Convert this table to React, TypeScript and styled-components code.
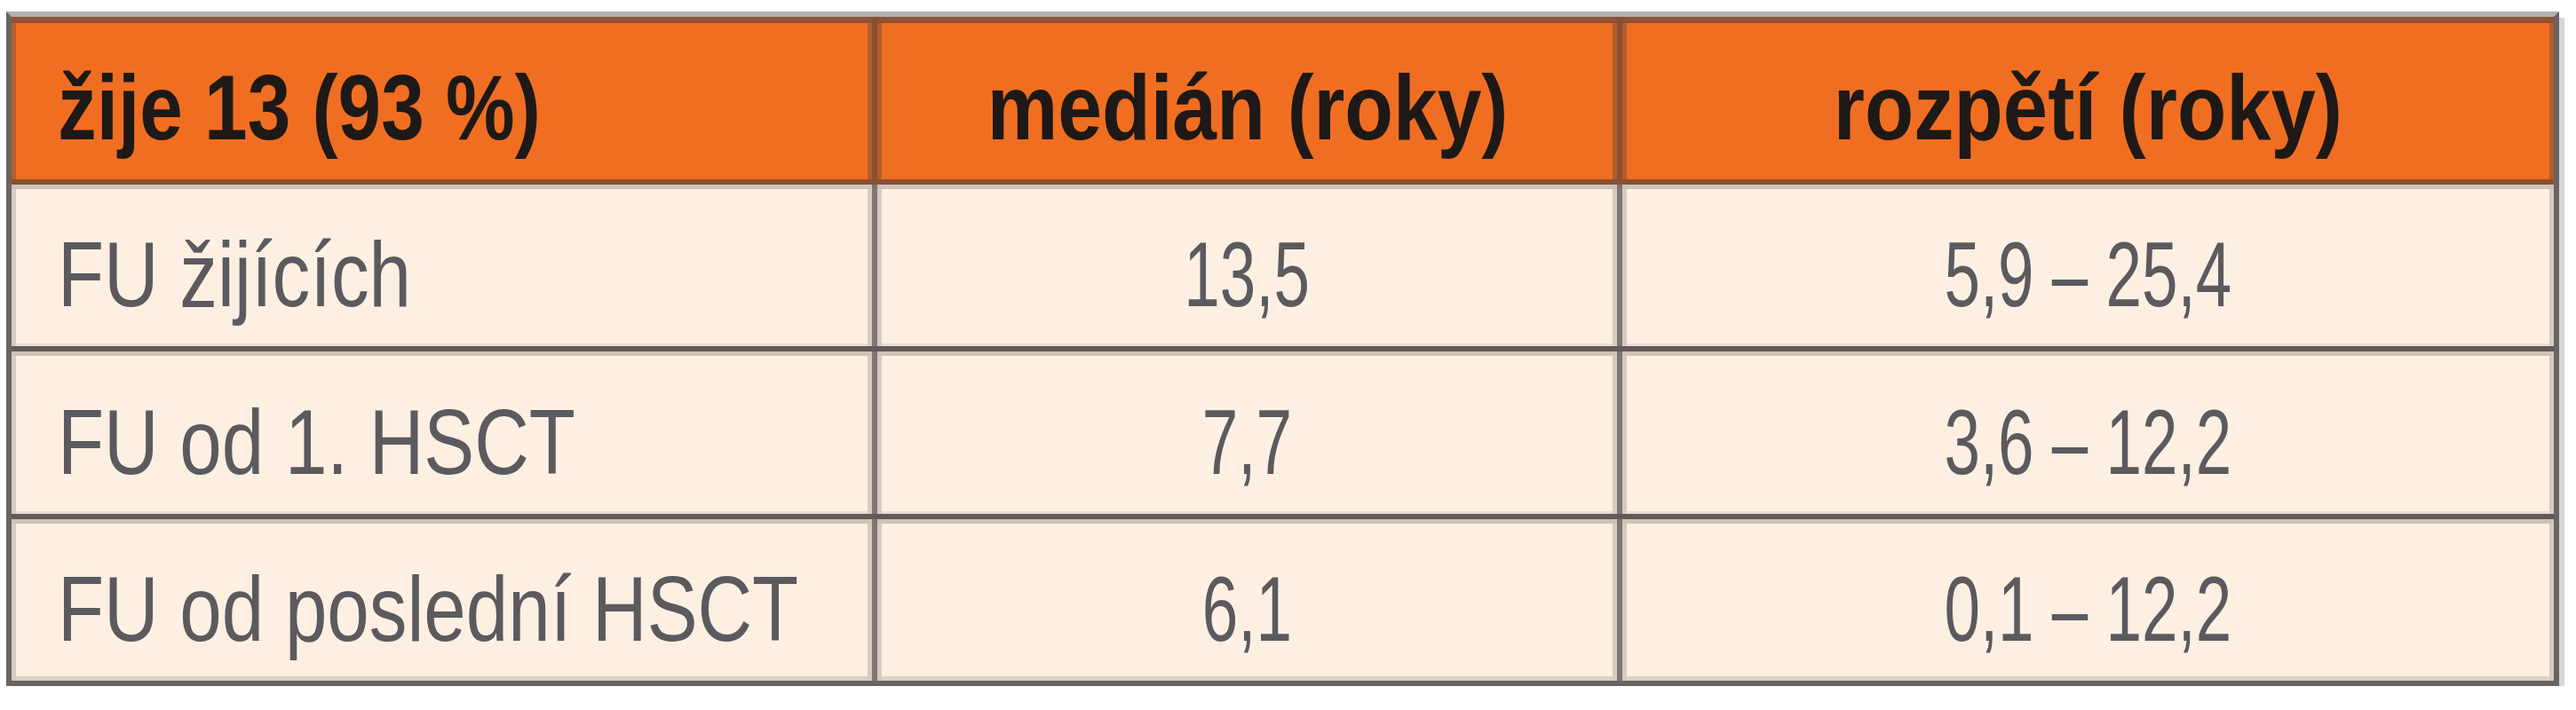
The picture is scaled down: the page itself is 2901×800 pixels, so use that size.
import React from "react";
import styled, { createGlobalStyle } from "styled-components";

const GlobalStyle = createGlobalStyle`
  html, body {
    margin: 0;
    padding: 0;
    background: #ffffff;
  }
  body {
    font-family: "Liberation Sans", Arial, sans-serif;
  }
`;

const Page = styled.div`
  padding: 13px 0 0 7px;
`;

const Table = styled.div`
  width: 2875px;
  box-sizing: border-box;
  display: flex;
  flex-direction: column;
  border: 6px solid #6a6361;
  border-top-color: #b3b0ae;
  background: #6a6361;
  box-shadow: 6px 7px 0 #d8d6d5;
`;

const Row = styled.div<{ $head?: boolean; $last?: boolean; $h: number }>`
  display: grid;
  grid-template-columns: 969px 833px 1fr;
  column-gap: 6px;
  box-sizing: border-box;
  height: ${(p) => p.$h}px;
  background: ${(p) => (p.$head ? "#8a4f30" : "#7e7672")};
  border-bottom: ${(p) => (p.$last ? "none" : `6px solid ${p.$head ? "#8a4f30" : "#625b59"}`)};
`;

const Cell = styled.div<{ $head?: boolean; $left?: boolean; $last?: boolean }>`
  display: flex;
  align-items: center;
  justify-content: ${(p) => (p.$left ? "flex-start" : "center")};
  box-sizing: border-box;
  padding: 21px 0 0 ${(p) => (p.$left ? 52 : 0)}px;
  background: ${(p) => (p.$head ? "#f06e22" : "#fdf0e3")};
  color: ${(p) => (p.$head ? "#1e1916" : "#5b5a5e")};
  font-weight: ${(p) => (p.$head ? 700 : 400)};
  font-size: 104px;
  white-space: nowrap;
  min-width: 0;
  box-shadow: ${(p) =>
    p.$head
      ? "inset 0 7px 0 #8f5233, inset 5px 0 0 #b45d2c, inset -5px 0 0 #b45d2c"
      : `inset 0 5px 0 #cfc3b8, inset 5px 0 0 #d6cbc1, inset -5px 0 0 #d6cbc1${
          p.$last ? ", inset 0 -5px 0 #ddd2c7" : ", inset 0 -3px 0 #eadfd4"
        }`};
`;

/* The original typeface is a narrow DIN-like face; a horizontally
   compressed Liberation Sans stands in for it. */
const Text = styled.span<{ $sx: number; $left?: boolean }>`
  display: inline-block;
  transform: scaleX(${(p) => p.$sx});
  transform-origin: ${(p) => (p.$left ? "left" : "center")} center;
`;

type RowData = { label: string; median: string; range: string };

const rows: RowData[] = [
  { label: "FU žijících", median: "13,5", range: "5,9 – 25,4" },
  { label: "FU od 1. HSCT", median: "7,7", range: "3,6 – 12,2" },
  { label: "FU od poslední HSCT", median: "6,1", range: "0,1 – 12,2" },
];

const heights = [188, 189, 182];

export default function App() {
  return (
    <>
      <GlobalStyle />
      <Page>
        <Table>
          <Row $head $h={189}>
            <Cell $head $left>
              <Text $sx={0.84} $left>
                žije 13 (93 %)
              </Text>
            </Cell>
            <Cell $head>
              <Text $sx={0.86}>medián (roky)</Text>
            </Cell>
            <Cell $head>
              <Text $sx={0.87}>rozpětí (roky)</Text>
            </Cell>
          </Row>
          {rows.map((r, i) => {
            const last = i === rows.length - 1;
            return (
              <Row key={r.label} $h={heights[i]} $last={last}>
                <Cell $left $last={last}>
                  <Text $sx={0.82} $left>
                    {r.label}
                  </Text>
                </Cell>
                <Cell $last={last}>
                  <Text $sx={0.7}>{r.median}</Text>
                </Cell>
                <Cell $last={last}>
                  <Text $sx={0.7}>{r.range}</Text>
                </Cell>
              </Row>
            );
          })}
        </Table>
      </Page>
    </>
  );
}
